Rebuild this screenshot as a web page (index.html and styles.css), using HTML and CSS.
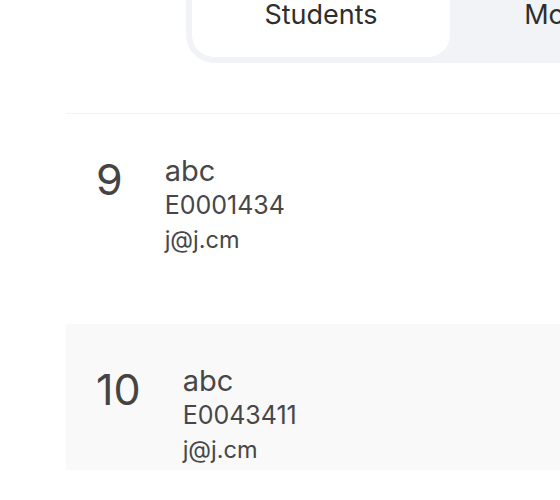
FILE: index.html
```html
<!DOCTYPE html>
<html>
<head>
<meta charset="utf-8">
<link rel="stylesheet" href="styles.css">
</head>
<body>
<div class="page">
  <div class="tabs">
    <div class="tab active">Students</div>
    <div class="tab">Modules</div>
  </div>
  <div class="list">
    <div class="row">
      <div class="num">9</div>
      <div class="info">
        <div class="name">abc</div>
        <div class="id">E0001434</div>
        <div class="email">j@j.cm</div>
      </div>
    </div>
    <div class="row alt">
      <div class="num">10</div>
      <div class="info">
        <div class="name">abc</div>
        <div class="id">E0043411</div>
        <div class="email">j@j.cm</div>
      </div>
    </div>
  </div>
</div>
</body>
</html>
```
FILE: styles.css
```css
html, body {
  margin: 0;
  padding: 0;
  background: #ffffff;
  overflow: hidden;
  width: 560px;
  height: 500px;
}
.page {
  font-family: Inter, "Liberation Sans", sans-serif;
  color: #474747;
}
.tabs {
  display: flex;
  margin-left: 186px;
  margin-top: -40px;
  width: 540px;
  padding: 6px;
  background: #f2f3f7;
  border-radius: 0 0 0 28px;
}
.tab {
  flex: 0 0 258px;
  height: 91px;
  box-sizing: border-box;
  padding-top: 32px;
  text-align: center;
  font-size: 27px;
  color: #2e2e2e;
}
.tab.active {
  background: #ffffff;
  border-radius: 0 0 22px 22px;
}
.list {
  margin-top: 50px;
  margin-left: 66px;
  width: 600px;
  border-top: 1px solid #f3f3f3;
  display: flex;
  flex-direction: column;
  gap: 64px;
}
.row {
  height: 146px;
  display: flex;
  align-items: flex-start;
  gap: 42px;
  padding: 40px 0 0 30px;
  box-sizing: border-box;
}
.row.alt {
  background: #f9f9f9;
}
.num {
  font-size: 43px;
  line-height: 50px;
  color: #444444;
}
.info {
  display: flex;
  flex-direction: column;
}
.name {
  font-size: 29px;
  line-height: 34px;
}
.id {
  font-size: 25px;
  line-height: 35px;
}
.email {
  font-size: 23.5px;
  line-height: 34px;
}
```
